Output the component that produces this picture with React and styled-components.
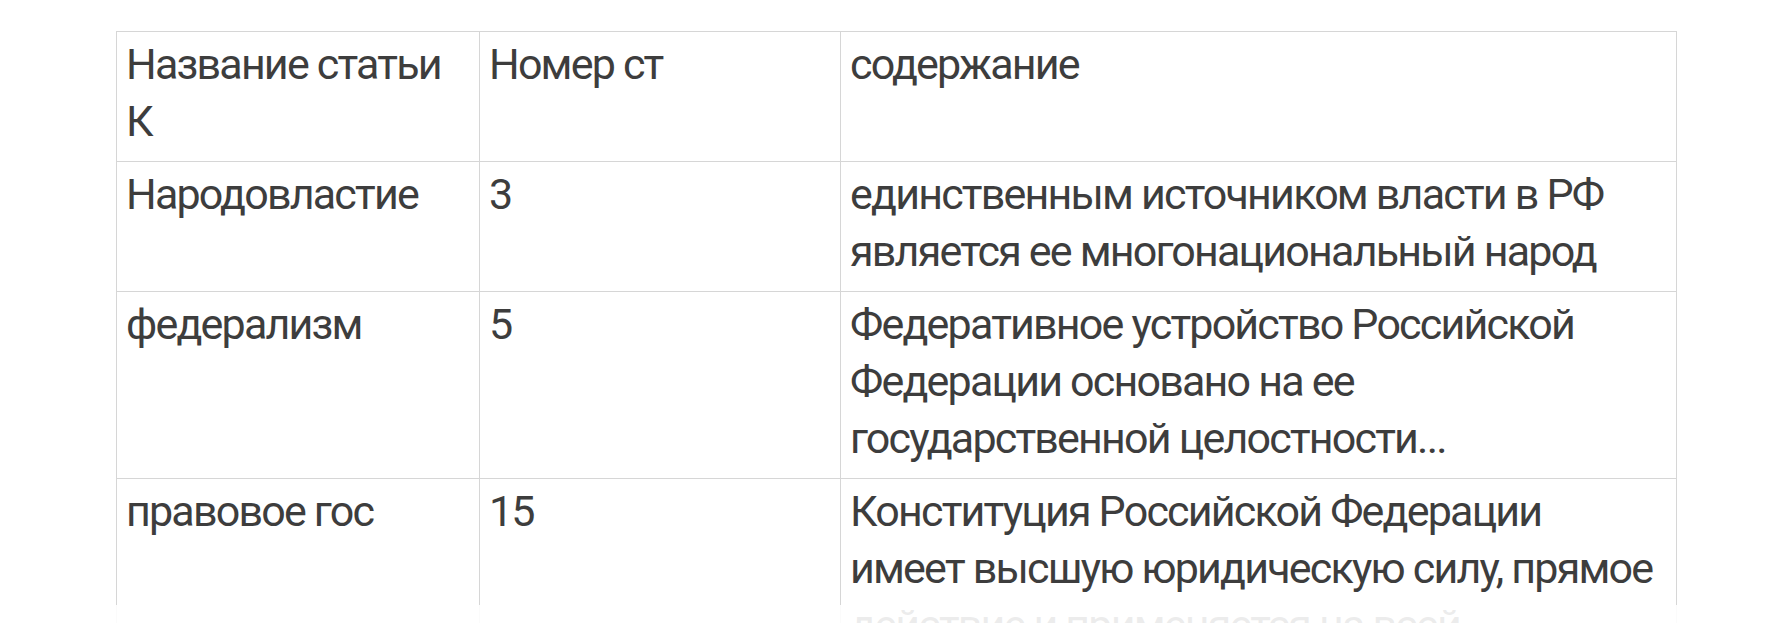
import React from "react";
import styled, { createGlobalStyle } from "styled-components";

const GlobalStyle = createGlobalStyle`
  html, body {
    margin: 0;
    padding: 0;
    background: #ffffff;
  }
`;

const Page = styled.div`
  position: relative;
  height: 623px;
  overflow: hidden;
  padding: 31px 0 0 116px;
  box-sizing: border-box;
  font-family: Roboto, "Noto Sans", sans-serif;
  color: #3d3d3d;
`;

const Table = styled.table`
  border-collapse: collapse;
  table-layout: fixed;
  width: 1560px;
`;

const Col = styled.col`
  width: ${p => p.$w}px;
`;

const Cell = styled.td`
  border: 1px solid #d6d6d6;
  padding: 4px 14px 11px 9px;
  font-size: 43px;
  line-height: 57px;
  letter-spacing: -1.8px;
  vertical-align: top;
  font-weight: 400;
  text-align: left;
`;

const Fade = styled.div`
  position: absolute;
  left: 0;
  right: 0;
  top: 605px;
  bottom: 0;
  background: rgba(255, 255, 255, 0.9);
`;

const rows = [
  ["Название статьи К", "Номер ст", "содержание"],
  ["Народовластие", "3", "единственным источником власти в РФ является ее многонациональный народ"],
  ["федерализм", "5", "Федеративное устройство Российской Федерации основано на ее государственной целостности..."],
  ["правовое гос", "15", "Конституция Российской Федерации имеет высшую юридическую силу, прямое действие и применяется на всей"],
];

export default function App() {
  return (
    <Page>
      <GlobalStyle />
      <Table>
        <colgroup>
          <Col $w={363} />
          <Col $w={361} />
          <Col $w={836} />
        </colgroup>
        <tbody>
          {rows.map((r, i) => (
            <tr key={i}>
              {r.map((c, j) => (
                <Cell key={j}>{c}</Cell>
              ))}
            </tr>
          ))}
        </tbody>
      </Table>
      <Fade />
    </Page>
  );
}
